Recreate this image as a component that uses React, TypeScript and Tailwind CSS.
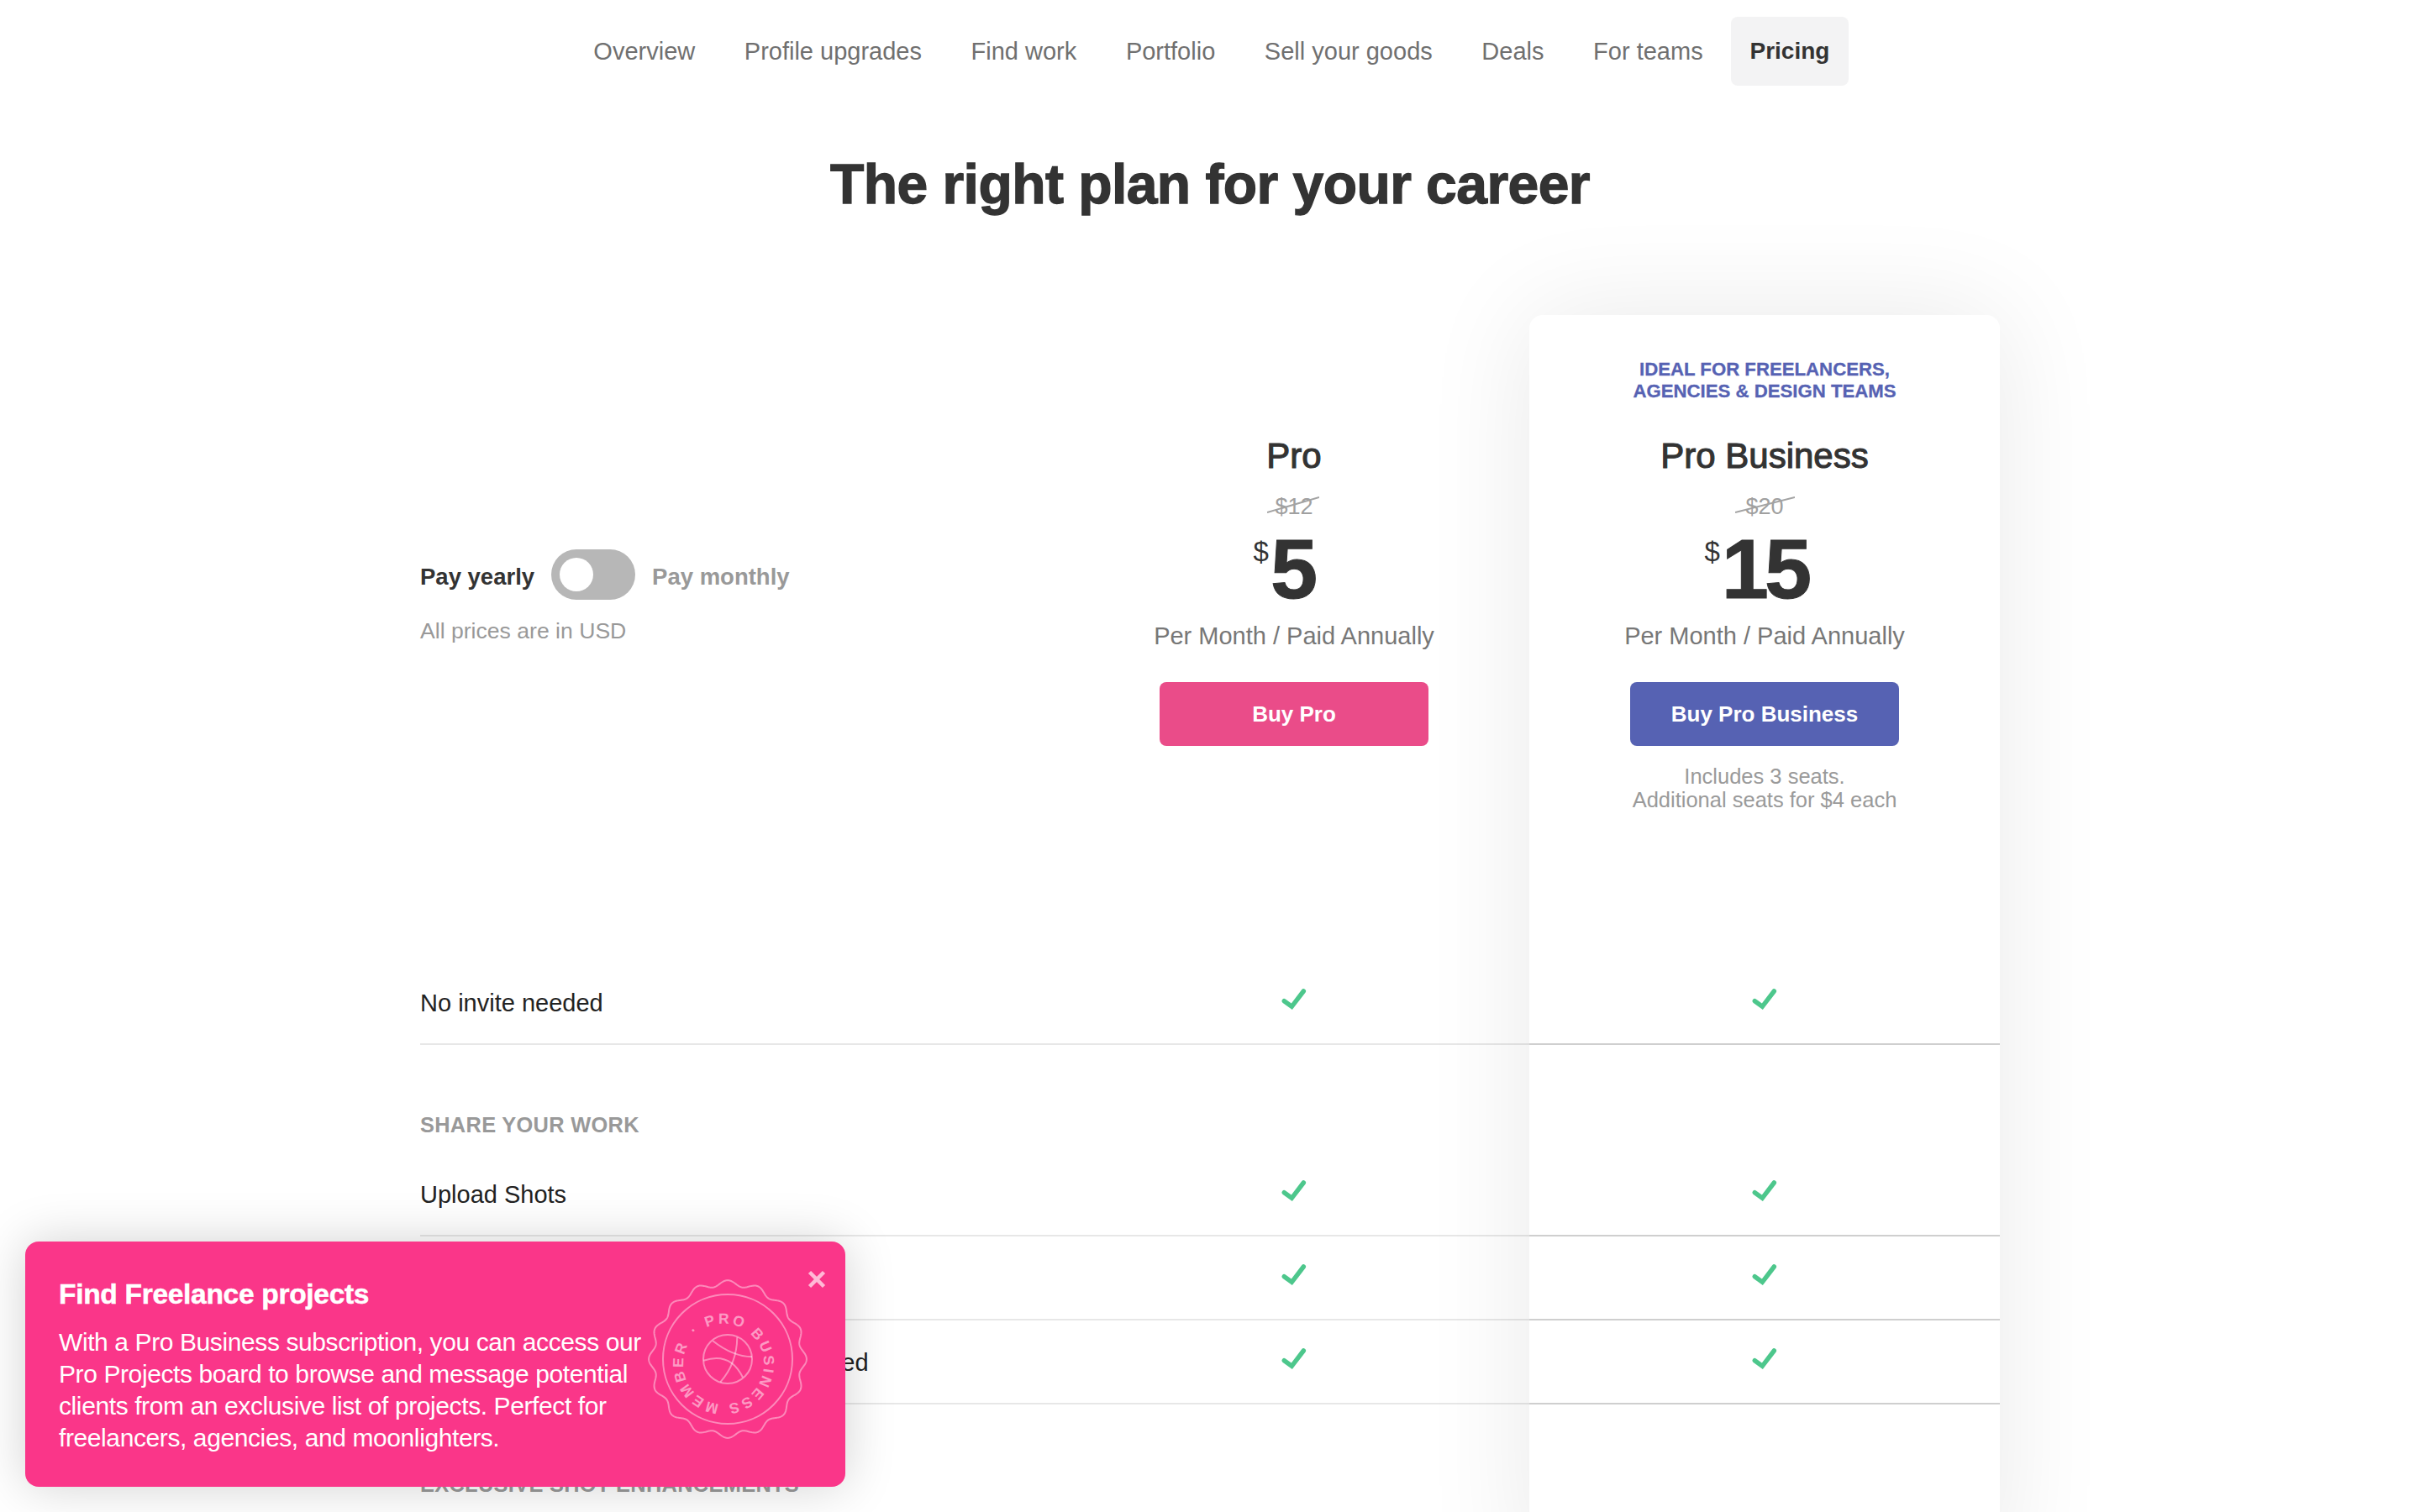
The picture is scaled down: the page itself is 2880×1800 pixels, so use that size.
import React from "react";

const navItems = ["Overview", "Profile upgrades", "Find work", "Portfolio", "Sell your goods", "Deals", "For teams"];

function Check() {
  return (
    <svg viewBox="0 0 32 26" className="w-[32px] h-[26px]" aria-hidden="true">
      <path d="M4.3 14.7 L13.3 21.3 L27.3 3" fill="none" stroke="#4dc78c" strokeWidth="5.5" strokeLinecap="round" />
    </svg>
  );
}

function Strike({ from }: { from: string }) {
  return (
    <svg viewBox="0 0 70 20" className={`absolute top-[6px] ${from} h-[20px]`} preserveAspectRatio="none" aria-hidden="true">
      <line x1="0" y1="19" x2="70" y2="1" stroke="#a3a3a3" strokeWidth="2" />
    </svg>
  );
}

function Plan({
  label,
  name,
  old,
  price,
  priceClass,
  strikeClass,
  button,
  buttonClass,
  note,
}: {
  label?: React.ReactNode;
  name: string;
  old: string;
  price: string;
  priceClass: string;
  strikeClass: string;
  button: string;
  buttonClass: string;
  note?: React.ReactNode;
}) {
  return (
    <div className="flex flex-col items-center h-[769px]">
      <div className="h-[143px] pt-[52px] text-center text-[22.2px] leading-[26px] font-bold text-[#5662b3] [-webkit-text-stroke:0.3px_#5662b3]">{label}</div>
      <div className="h-[50px] leading-[50px] text-[42px] text-[#333] [-webkit-text-stroke:1.1px_#333]">{name}</div>
      <div className="relative mt-[17px] h-[36px] leading-[36px] text-[27px] text-[#a0a0a0]">
        {old}
        <Strike from={strikeClass} />
      </div>
      <div className={`relative mt-[21px] h-[70px] leading-[70px] text-[101px] font-bold text-[#333] [-webkit-text-stroke:1px_#333] ${priceClass}`}>
        <span className="absolute right-full top-[-3px] mr-[2px] text-[33px] leading-[36px] font-normal [-webkit-text-stroke:0] tracking-normal">$</span>
        {price}
      </div>
      <div className="mt-[27px] h-[36px] leading-[36px] text-[29px] text-[#777]">Per Month / Paid Annually</div>
      <button className={`mt-[37px] w-[320px] h-[76px] rounded-[8px] text-white font-bold text-[26px] ${buttonClass}`}>{button}</button>
      {note && <div className="mt-[22px] text-center text-[25.5px] leading-[28px] text-[#9a9a9a]">{note}</div>}
    </div>
  );
}

function Row({ label }: { label: string }) {
  return (
    <>
      <div className="h-[100px] border-b-2 border-[#e7e7e7] flex items-center text-[29px] text-[#222] pt-[4px]">{label}</div>
      <div className="h-[100px] border-b-2 border-[#e7e7e7] flex items-center justify-center pb-[6px]">
        <Check />
      </div>
      <div className="h-[100px] border-b-2 border-[#cfcfcf] flex items-center justify-center pb-[6px]">
        <Check />
      </div>
    </>
  );
}

function Section({ label }: { label: string }) {
  return (
    <div className="col-span-3 h-[128px] flex items-end pb-[19px] text-[25.4px] leading-[28px] font-bold text-[#999] tracking-[0.3px]">{label}</div>
  );
}

function Badge() {
  const pts: string[] = [];
  for (let i = 0; i <= 720; i++) {
    const a = (i / 720) * Math.PI * 2;
    const r = 90.5 + 3.4 * Math.cos(16 * a);
    pts.push(`${(r * Math.sin(a)).toFixed(2)},${(-r * Math.cos(a)).toFixed(2)}`);
  }
  return (
    <svg viewBox="-100 -100 200 200" className="absolute left-[736px] top-[40px] w-[200px] h-[200px]" aria-hidden="true">
      <g fill="none" stroke="#ffffff" strokeOpacity="0.42" strokeWidth="2">
        <polygon points={pts.join(" ")} />
        <circle r="77" />
        <circle r="29" />
        <path d="M-17.7 -21.7 Q6 -3 29 -2.7" />
        <path d="M11.3 -26 Q11 5 -8.7 27.3" />
        <path d="M-28.7 1.7 Q3 -9 18 21.7" />
      </g>
      <defs>
        <path id="badge-ring" d="M-38.8 -28.2 A48 48 0 1 1 -38.9 -28.1" />
      </defs>
      <text fill="#ffffff" fillOpacity="0.5" fontSize="17.5" fontWeight="700" fontFamily="'Liberation Sans', Arial, sans-serif">
        <textPath href="#badge-ring" textLength="286" lengthAdjust="spacing">· PRO BUSINESS MEMBER</textPath>
      </text>
    </svg>
  );
}

export default function App() {
  return (
    <div className="relative h-[1800px] overflow-hidden bg-white font-['Liberation_Sans',Arial,sans-serif]">
      <nav className="flex justify-center pt-[20px] h-[102px] pr-[3px]">
        {navItems.map((t) => (
          <a key={t} className="px-[29.3px] leading-[82px] text-[29px] text-[#707070]">
            {t}
          </a>
        ))}
        <a className="ml-[4px] w-[140px] text-center h-[82px] leading-[82px] rounded-[8px] bg-[#f3f3f4] text-[28px] font-bold text-[#333]">Pricing</a>
      </nav>

      <h1 className="mt-[77px] mb-[116px] h-[80px] leading-[80px] text-center text-[66px] font-bold text-[#333] tracking-[-0.55px] [-webkit-text-stroke:1.3px_#333]">
        The right plan for your career
      </h1>

      <main className="relative mx-auto w-[1880px] grid grid-cols-[760px_560px_560px]">
        <div className="h-[769px] pt-[279px]">
          <div className="flex items-center h-[60px]">
            <span className="pt-[6px] text-[27.5px] font-bold text-[#333]">Pay yearly</span>
            <span className="ml-[20px] w-[100px] h-[60px] rounded-full bg-[#b7b7b7] flex items-center pl-[10px]">
              <span className="w-[40px] h-[40px] rounded-full bg-white" />
            </span>
            <span className="pt-[6px] ml-[20px] text-[27.5px] font-bold text-[#999]">Pay monthly</span>
          </div>
          <div className="mt-[21px] h-[32px] leading-[32px] text-[26.6px] text-[#999]">All prices are in USD</div>
        </div>
        <Plan name="Pro" old="$12" price="5" priceClass="" strikeClass="left-[-9px] w-[62px]" button="Buy Pro" buttonClass="bg-[#ea4c89]" />
        <Plan
          label={
            <>
              IDEAL FOR FREELANCERS,
              <br />
              AGENCIES &amp; DESIGN TEAMS
            </>
          }
          name="Pro Business"
          old="$20"
          price="15"
          priceClass="tracking-[-5px]"
          strikeClass="left-[-12px] w-[71px]"
          button="Buy Pro Business"
          buttonClass="bg-[#5662b3]"
          note={
            <>
              Includes 3 seats.
              <br />
              Additional seats for $4 each
            </>
          }
        />
        <Row label="No invite needed" />
        <Section label="SHARE YOUR WORK" />
        <Row label="Upload Shots" />
        <Row label="Build a portfolio" />
        <Row label="Have your Shots discovered and featured" />
        <Section label="EXCLUSIVE SHOT ENHANCEMENTS" />
        <div className="absolute z-10 pointer-events-none left-[1320px] top-0 w-[560px] h-[1500px] rounded-[16px] shadow-[0_0_130px_rgba(0,0,0,0.09)]" />
      </main>

      <aside className="absolute z-20 left-[30px] top-[1478px] w-[976px] h-[292px] rounded-[16px] bg-[#fa3689] shadow-[0_0_60px_rgba(0,0,0,0.18)] text-white pl-[40px] pt-[42px]">
        <div className="h-[42px] leading-[42px] text-[33.5px] font-bold tracking-[-0.3px] [-webkit-text-stroke:0.5px_#fff]">Find Freelance projects</div>
        <p className="mt-[17px] w-[700px] text-[30px] leading-[38px] tracking-[-0.4px]">
          With a Pro Business subscription, you can access our
          <br />
          Pro Projects board to browse and message potential
          <br />
          clients from an exclusive list of projects. Perfect for
          <br />
          freelancers, agencies, and moonlighters.
        </p>
        <Badge />
        <svg viewBox="0 0 22 22" className="absolute right-[23px] top-[34px] w-[22px] h-[22px]" aria-hidden="true">
          <path d="M2.5 2.5 L19.5 19.5 M19.5 2.5 L2.5 19.5" stroke="#ffb9d6" strokeWidth="4.5" fill="none" />
        </svg>
      </aside>
    </div>
  );
}
